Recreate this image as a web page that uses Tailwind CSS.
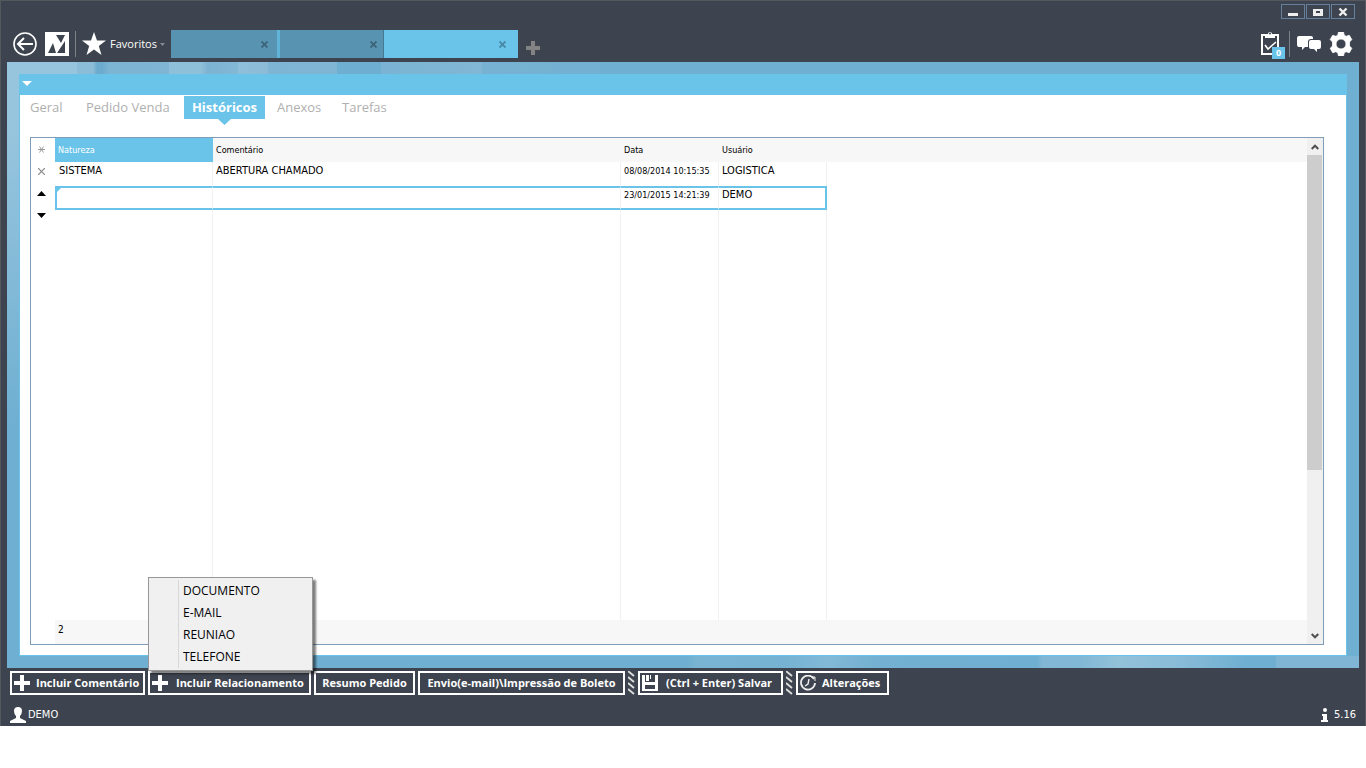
<!DOCTYPE html>
<html lang="pt-BR">
<head>
  <meta charset="UTF-8" />
  <meta name="viewport" content="width=device-width, initial-scale=1.0" />
  <title>Históricos</title>
  <script src="https://cdn.jsdelivr.net/npm/@tailwindcss/browser@4"></script>
</head>
<body class="bg-white h-screen flex flex-col pb-[42px] font-['Open_Sans',sans-serif] text-xs">

  <div class="flex-1 min-h-0 flex flex-col bg-[#3e444f] border border-b-0 border-[#55585c] px-[6px]">

    <!-- Window buttons -->
    <div class="flex justify-end gap-px pt-[3px] pr-1">
      <button aria-label="Minimizar" class="w-6 h-[15px] border border-[#64809c] flex items-center justify-center">
        <svg class="w-[10px] h-[10px]" viewBox="0 0 10 10"><path d="M0 6h10v3H0z" fill="#eee" /></svg>
      </button>
      <button aria-label="Restaurar" class="w-6 h-[15px] border border-[#64809c] flex items-center justify-center">
        <svg class="w-[10px] h-[10px]" viewBox="0 0 10 10"><path d="M0 2h10v7H0zM3 4v2h4V4z" fill="#eee" fill-rule="evenodd" /></svg>
      </button>
      <button aria-label="Fechar" class="w-6 h-[15px] border border-[#64809c] flex items-center justify-center">
        <svg class="w-[10px] h-[10px]" viewBox="0 0 10 10"><path d="M1.500 1.500l7 7M8.500 1.500l-7 7" stroke="#eee" stroke-width="2.400" /></svg>
      </button>
    </div>

    <!-- Toolbar -->
    <header class="flex items-center h-7 mt-[11px] mb-[4px] px-[6px]">
      <button aria-label="Voltar" class="w-6 h-6">
        <svg viewBox="0 0 24 24" fill="none" stroke="#fff" stroke-width="1.600"><circle cx="12" cy="12" r="11" /><path d="M20 12H5M11 6l-6 6 6 6" stroke-width="2" /></svg>
      </button>
      <a href="#" aria-label="Início" class="w-6 h-6 ml-2">
        <svg viewBox="0 0 24 24"><path d="M0 0h24v24H0z" fill="#fff" /><path d="M11 3h9l-4 8zM3 21l5-10 3 10zM12 21l8-12v12z" fill="#3e444f" /></svg>
      </a>
      <span class="w-px h-[26px] bg-[#7d8087] ml-[6px]"></span>
      <button class="flex items-center ml-[6px] text-white text-[11px]">
        <svg class="w-6 h-6" viewBox="0 0 24 24"><path d="M12 0l3 8.500h9l-7.200 5.400 2.700 9-7.500-5.400-7.500 5.400 2.700-9L0 8.500h9z" fill="#fff" /></svg>
        <span class="ml-1">Favoritos</span>
        <svg class="w-[5px] h-[3px] ml-[3px]" viewBox="0 0 5 3"><path d="M0 0h5L2.500 3z" fill="#888b91" /></svg>
      </button>

      <nav class="flex ml-[6px] h-7" aria-label="Janelas">
        <div class="w-[106px] flex items-center justify-end pr-[9px] bg-[#5894b1]">
          <button aria-label="Fechar janela 1"><svg class="w-[7px] h-[7px]" viewBox="0 0 7 7"><path d="M.5.5l6 6M6.500.5l-6 6" stroke="#3b6378" stroke-width="1.800" /></svg></button>
        </div>
        <div class="w-[106px] flex items-center justify-end pr-[6px] bg-[#5894b1] border-l-3 border-[#62b3d9]">
          <button aria-label="Fechar janela 2"><svg class="w-[7px] h-[7px]" viewBox="0 0 7 7"><path d="M.5.5l6 6M6.500.5l-6 6" stroke="#3b6378" stroke-width="1.800" /></svg></button>
        </div>
        <div class="w-[135px] flex items-center justify-end pr-3 bg-[#6ac3e9] border-l border-[#467a94]">
          <button aria-label="Fechar janela 3"><svg class="w-[7px] h-[7px]" viewBox="0 0 7 7"><path d="M.5.5l6 6M6.500.5l-6 6" stroke="#4687a3" stroke-width="1.800" /></svg></button>
        </div>
      </nav>
      <button aria-label="Nova janela" class="ml-2 mt-2">
        <svg class="w-[14px] h-[14px]" viewBox="0 0 14 14"><path d="M5 0h4v5h5v4H9v5H5V9H0V5h5z" fill="#838383" /></svg>
      </button>

      <div class="flex items-center ml-auto">
        <button aria-label="Tarefas pendentes" class="relative w-6 h-7 flex">
          <svg class="w-[18px] h-6 mt-px" viewBox="0 0 18 24"><path d="M1 4h16v19H1z" fill="none" stroke="#fff" stroke-width="2" /><path d="M4 3h3a2 2 0 0 1 4 0h3v4H4z" fill="#fff" /><circle cx="9" cy="2.500" r="1" fill="#3e444f" /><path d="M4 14l3 4 8-7" fill="none" stroke="#fff" stroke-width="1.600" /></svg>
          <span class="absolute right-0 bottom-[-1px] w-[13px] h-3 bg-[#6ac3e9] text-white text-[9px] leading-3 font-bold text-center">0</span>
        </button>
        <span class="w-px h-[26px] bg-[#7d8087] ml-1"></span>
        <button aria-label="Mensagens" class="ml-[7px]">
          <svg class="w-6 h-[18px]" viewBox="0 0 24 18" fill="#fff"><path d="M2 1h12q2 0 2 2v1h-2q-3 0-3 3v5H8l-3 3v-3H2q-2 0-2-2V3q0-2 2-2z" /><path d="M14 5h8q2 0 2 2v5q0 2-2 2h-2v3l-3-3h-3q-2 0-2-2V7q0-2 2-2z" /></svg>
        </button>
        <button aria-label="Configurações" class="ml-2">
          <svg class="w-6 h-6" viewBox="0 0 24 24"><path d="M9.500 0h5l.7 3.200 2 1.100 3.100-1 2.500 4.300L20.500 10v4l2.300 2.300-2.500 4.400-3.100-1-2 1.100-.7 3.200h-5l-.7-3.200-2-1.100-3.100 1-2.500-4.400L3.500 14v-4L1.200 7.600l2.500-4.300 3.100 1 2-1.100zM12 7a5 5 0 1 0 0 10 5 5 0 1 0 0-10z" fill="#fff" fill-rule="evenodd" stroke="#fff" stroke-width=".8" stroke-linejoin="round" /></svg>
        </button>
      </div>
    </header>

    <!-- Content -->
    <main class="flex-1 min-h-0 flex flex-col bg-[linear-gradient(180deg,transparent_0,transparent_60px,#6fafd1_60%),linear-gradient(90deg,#98c5de_70px,#8bbdd8_70px,#8bbdd8_86px,#6cabcd_90px,#6cabcd_95px,#7cb4d3_102px,#80b5d4_162px,#8fc0da_162px,#8fc0da_194px,#7cb3d2_201px,#83b8d5_231px,#8fbeda_231px,#8bbbd7_261px,#7fb5d4_261px,#80b6d4_330px,#6eaed0_330px,#6eaed0_374px,#7ab3d3_374px,#82b7d5_474px,#77b2d2_476px,#73b0d1_593px,#6fafd1_594px)]">
      <section class="flex-1 min-h-0 flex flex-col mt-3 mx-3 bg-white border border-[#6ac3e9]">
        <div class="h-5 bg-[#6ac3e9] px-[2px] pb-[3px] flex items-center">
          <button aria-label="Recolher"><svg class="w-[10px] h-[5px]" viewBox="0 0 10 5"><path d="M0 0h10L5 5z" fill="#fff" /></svg></button>
        </div>

        <nav class="flex h-[25px] mt-px pl-px text-[13px] leading-[23px] text-[#b0b0b0]">
          <a href="#" class="w-[54px] pl-[9px]">Geral</a>
          <a href="#" class="w-[109px] pl-[11px]">Pedido Venda</a>
          <a href="#" class="relative w-[81px] h-[23px] text-center font-bold text-white bg-[#6ac3e9]" aria-current="page">Históricos
            <svg class="absolute left-[34px] top-full w-[13px] h-[6px]" viewBox="0 0 13 6"><path d="M0 0h13L6.500 6z" fill="#6ac3e9" /></svg>
          </a>
          <a href="#" class="w-[65px] pl-3">Anexos</a>
          <a href="#" class="pl-3">Tarefas</a>
        </nav>

        <!-- Grid -->
        <div class="flex-1 min-h-0 flex mt-4 mb-[10px] ml-[10px] mr-[22px] border border-[#7f9db9] font-['DejaVu_Sans_Condensed','DejaVu_Sans',sans-serif] text-[11px] leading-3 text-black">
          <div class="w-6 pr-[3px] flex flex-col items-center">
            <button aria-label="Novo" class="h-[22px]"><svg class="w-[7px] h-[7px]" viewBox="0 0 7 7"><path d="M0 3.500h7M1.500 .5l4 6M5.500 .5l-4 6" stroke="#999" /></svg></button>
            <button aria-label="Excluir" class="h-[22px]"><svg class="w-[7px] h-[7px]" viewBox="0 0 7 7"><path d="M0 0l7 7M7 0L0 7" stroke="#888" stroke-width="1.200" /></svg></button>
            <button aria-label="Subir" class="h-[22px]"><svg class="w-[9px] h-[5px]" viewBox="0 0 9 5"><path d="M0 5h9L4.500 0z" /></svg></button>
            <button aria-label="Descer" class="h-[22px]"><svg class="w-[9px] h-[5px]" viewBox="0 0 9 5"><path d="M0 0h9L4.500 5z" /></svg></button>
          </div>
          <div class="flex-1 min-h-0 flex flex-col">
            <div class="flex-1 min-h-0">
              <table class="w-full h-full table-fixed border-separate border-spacing-0 text-left whitespace-nowrap">
                <colgroup>
                  <col class="w-[158px]" /><col class="w-[408px]" /><col class="w-[98px]" /><col class="w-[108px]" /><col />
                </colgroup>
                <thead class="text-[9px]">
                  <tr class="h-6 bg-[#f7f7f7]">
                    <th class="p-0 pl-[3px] font-normal text-white bg-[#6ac3e9]">Natureza</th>
                    <th class="p-0 pl-[3px] font-normal">Comentário</th>
                    <th class="p-0 pl-[3px] font-normal">Data</th>
                    <th class="p-0 pl-[3px] font-normal">Usuário</th>
                    <td class="p-0"></td>
                  </tr>
                </thead>
                <tbody>
                  <tr class="h-6">
                    <td class="p-0 pl-1 pb-[6px] border-r border-[#f0f0f0]">SISTEMA</td>
                    <td class="p-0 pl-[3px] pb-[6px] border-r border-[#f0f0f0]">ABERTURA CHAMADO</td>
                    <td class="p-0 pl-[3px] pb-[6px] border-r border-[#f0f0f0] text-[9px]">08/08/2014 10:15:35</td>
                    <td class="p-0 pl-[3px] pb-[6px] border-r border-[#f0f0f0]">LOGISTICA</td>
                    <td class="p-0"></td>
                  </tr>
                  <tr class="h-6">
                    <td class="p-0 align-top border-y-2 border-l-2 border-r border-y-[#6ac3e9] border-l-[#6ac3e9] border-r-[#f0f0f0]">
                      <svg class="w-1 h-1" viewBox="0 0 4 4"><path d="M0 0h4L0 4z" fill="#6ac3e9" /></svg>
                    </td>
                    <td class="p-0 border-y-2 border-r border-y-[#6ac3e9] border-r-[#f0f0f0]"></td>
                    <td class="p-0 pl-[3px] pb-[6px] border-y-2 border-r border-y-[#6ac3e9] border-r-[#f0f0f0] text-[9px]">23/01/2015 14:21:39</td>
                    <td class="p-0 pl-[3px] pb-[6px] border-y-2 border-r-2 border-[#6ac3e9]">DEMO</td>
                    <td class="p-0"></td>
                  </tr>
                  <tr>
                    <td class="border-r border-[#f0f0f0]"></td>
                    <td class="border-r border-[#f0f0f0]"></td>
                    <td class="border-r border-[#f0f0f0]"></td>
                    <td class="border-r border-[#f0f0f0]"></td>
                    <td></td>
                  </tr>
                </tbody>
              </table>
            </div>
            <div class="h-6 pl-[3px] pt-1 bg-[#f7f7f7] text-[10px]">2</div>
          </div>
          <div class="w-4 flex flex-col bg-[#f0f0f0]">
            <button aria-label="Rolar para cima" class="h-[17px] flex items-center justify-center"><svg class="w-[8px] h-[6px]" viewBox="0 0 8 6"><path d="M.7 5L4 1.700 7.300 5" fill="none" stroke="#505050" stroke-width="2" /></svg></button>
            <div class="h-[315px] mr-px bg-[#cdcdcd]"></div>
            <button aria-label="Rolar para baixo" class="h-[17px] mt-auto flex items-center justify-center"><svg class="w-[8px] h-[6px]" viewBox="0 0 8 6"><path d="M.7 1L4 4.300 7.300 1" fill="none" stroke="#505050" stroke-width="2" /></svg></button>
          </div>
        </div>
      </section>
      <div class="h-3 bg-[linear-gradient(90deg,#6fafd1_680px,#79b4d3_690px,#76b2d3_780px,#82b9d7_820px,#73b0d1_870px,#6fafd1_1030px,#83b8d5_1036px,#80b7d5_1070px,#92c1da_1110px,#8bbdd8_1165px,#6fafd1_1240px,#6fafd1_1268px,#80b5d5_1270px)]"></div>
    </main>

    <!-- Actions -->
    <div class="flex h-6 mt-[3px] pl-[3px] gap-[3px] text-white text-[11px] font-bold whitespace-nowrap">
      <button class="w-[135px] flex items-center border-2 border-white pl-[2px]">
        <svg class="w-4 h-4 shrink-0" viewBox="0 0 16 16"><path d="M6 0h4v6h6v4h-6v6H6v-6H0V6h6z" fill="#fff" /></svg>
        <span class="ml-[6px]">Incluir Comentário</span>
      </button>
      <div class="relative flex">
        <button class="w-[163px] flex items-center border-2 border-white pl-[2px]" aria-haspopup="menu" aria-expanded="true">
          <svg class="w-4 h-4 shrink-0" viewBox="0 0 16 16"><path d="M6 0h4v6h6v4h-6v6H6v-6H0V6h6z" fill="#fff" /></svg>
          <span class="ml-2">Incluir Relacionamento</span>
        </button>
        <div role="menu" class="absolute left-0 bottom-full w-[165px] py-[2px] border border-[#979797] bg-[#f0f0f0] shadow-[3px_3px_2px_rgba(0,0,0,0.5)] text-xs text-black font-normal">
          <div class="ml-[29px] border-l border-[#d7d7d7] flex flex-col">
            <button role="menuitem" class="h-[22px] pl-1 text-left">DOCUMENTO</button>
            <button role="menuitem" class="h-[22px] pl-1 text-left">E-MAIL</button>
            <button role="menuitem" class="h-[22px] pl-1 text-left">REUNIAO</button>
            <button role="menuitem" class="h-[22px] pl-1 text-left">TELEFONE</button>
          </div>
        </div>
      </div>
      <button class="w-[101px] border-2 border-white">Resumo Pedido</button>
      <button class="w-[207px] border-2 border-white">Envio(e-mail)\Impressão de Boleto</button>
      <svg class="w-[7px] h-6" viewBox="0 0 7 24"><path d="M0 0l6 5M0 6l6 5M0 12l6 5M0 18l6 5" stroke="#ddd" stroke-width="1.800" /></svg>
      <button class="w-[145px] flex items-center border-2 border-white pl-[2px]">
        <svg class="w-4 h-4 shrink-0" viewBox="0 0 16 16"><path d="M0 0h3v7h10V0h3v16H0zM4 0h3v6H4zM8 0h1v4H8zM3 10v4h10v-4z" fill="#fff" fill-rule="evenodd" /></svg>
        <span class="ml-2">(Ctrl + Enter) Salvar</span>
      </button>
      <svg class="w-[7px] h-6" viewBox="0 0 7 24"><path d="M0 0l6 5M0 6l6 5M0 12l6 5M0 18l6 5" stroke="#ddd" stroke-width="1.800" /></svg>
      <button class="w-[93px] flex items-center border-2 border-white pl-[2px]">
        <svg class="w-4 h-4 shrink-0" viewBox="0 0 16 16" fill="none" stroke="#eee"><path d="M14 4a7 7 0 1 0 1 4" stroke-width="1.800" /><path d="M11 2h4v4" /><path d="M9 4L8 9l-3 2" stroke-width="1.400" /></svg>
        <span class="ml-[6px]">Alterações</span>
      </button>
    </div>

    <footer class="flex items-center justify-between h-[31px] px-[3px] pt-2 text-white text-[11px] leading-4 font-['DejaVu_Sans_Condensed','DejaVu_Sans',sans-serif]">
      <div class="flex items-center">
        <svg class="w-4 h-4 mr-[2px]" viewBox="0 0 16 16"><path d="M8 0q4 0 4 4 0 3-2 5v2l6 3v2H0v-2l6-3V9Q4 7 4 4q0-4 4-4z" fill="#fff" /></svg>
        DEMO
      </div>
      <div class="flex items-center">
        <svg class="w-[8px] h-[14px] mr-[5px]" viewBox="0 0 8 14"><path d="M4 0a2 2 0 1 1 0 4 2 2 0 1 1 0-4zM1 6h5v6h1v2H0v-2h2V8H1z" fill="#fff" /></svg>
        5.16
      </div>
    </footer>
  </div>

</body>
</html>
